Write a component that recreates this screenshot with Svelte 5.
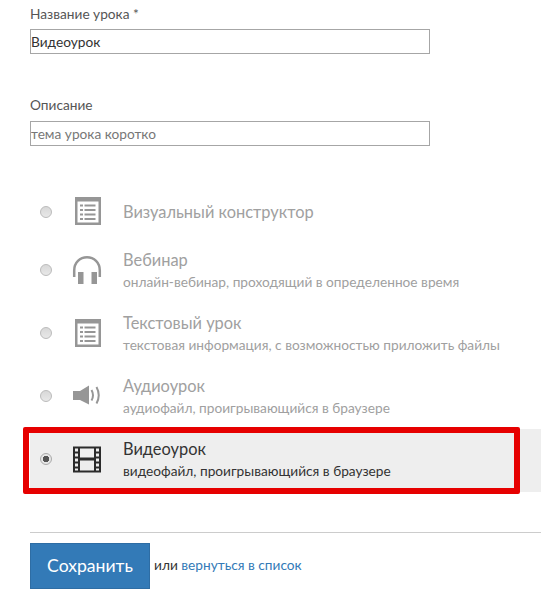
<script>
  const rows = [
    { icon: 'list', title: 'Визуальный конструктор', short: true },
    { icon: 'head', title: 'Вебинар', sub: 'онлайн-вебинар, проходящий в определенное время' },
    { icon: 'list', title: 'Текстовый урок', sub: 'текстовая информация, с возможностью приложить файлы' },
    { icon: 'audio', title: 'Аудиоурок', sub: 'аудиофайл, проигрывающийся в браузере' },
    { icon: 'film', title: 'Видеоурок', sub: 'видеофайл, проигрывающийся в браузере', active: true }
  ];
</script>

{#snippet icon(name)}
  {#if name === 'list'}
    <svg width="30" height="28" viewBox="0 0 30 28">
      <path fill-rule="evenodd" fill="#969696" d="M3 0h26v28H3zM5.500 4.500v21h21v-21z" />
      <path fill="#969696" d="M8 7.500h3v2H8zM12.500 7.500h11v2h-11zM8 12h3v2H8zM12.500 12h11v2h-11zM8 16.500h3v2H8zM12.500 16.500h11v2h-11zM8 21h3v2H8zM12.500 21h11v2h-11z" />
    </svg>
  {:else if name === 'head'}
    <svg width="30" height="28" viewBox="0 0 30 28">
      <path fill="none" stroke="#969696" stroke-width="2.500" d="M2.200 21V14.500C2.200 6.500 8 1.300 15 1.300s12.800 5.200 12.800 13.200V21" />
      <path fill="#969696" d="M6 16h5.500v12H6zM19.500 16H25v12h-5.500z" />
    </svg>
  {:else if name === 'audio'}
    <svg width="30" height="28" viewBox="0 0 30 28">
      <path fill="#969696" d="M1 9h7l9-5.500v19L8 18H1z" />
      <path fill="none" stroke="#969696" stroke-width="2" d="M19.500 8c2 3.500 2 7 0 10.500M24.500 5c3 5.500 3 11 0 16.500" />
    </svg>
  {:else}
    <svg width="30" height="28" viewBox="0 0 30 28">
      <path fill-rule="evenodd" fill="#2b2b2b" d="M1 1.500h28v26H1zM3 3.500v3h3v-3zM3 8.500v3h3v-3zM3 13.500v3h3v-3zM3 18.500v3h3v-3zM3 23.500v2h3v-2zM24 3.500v3h3v-3zM24 8.500v3h3v-3zM24 13.500v3h3v-3zM24 18.500v3h3v-3zM24 23.500v2h3v-2zM8 3.500v9h14v-9zM8 15.500v10h14v-10z" />
    </svg>
  {/if}
{/snippet}

<div class="page">
  <div class="field">
    <label for="n">Название урока *</label>
    <input id="n" value="Видеоурок" />
  </div>
  <div class="field second">
    <label for="d">Описание</label>
    <input id="d" placeholder="тема урока коротко" />
  </div>

  <div class="rows">
    {#each rows as r}
      <div class="row" class:short={r.short} class:active={r.active}>
        <span class="radio"></span>
        <span class="ico">{@render icon(r.icon)}</span>
        <div class="text">
          <div class="title">{r.title}</div>
          {#if r.sub}<div class="sub">{r.sub}</div>{/if}
        </div>
        {#if r.active}<span class="mark"></span>{/if}
      </div>
    {/each}
  </div>

  <div class="actions">
    <button>Сохранить</button>
    <span class="or">или <a href="#list">вернуться в список</a></span>
  </div>
</div>

<style>
  :global(body) {
    margin: 0;
    background: #fff;
  }
  .page {
    width: 541px;
    height: 608px;
    overflow: hidden;
    box-sizing: border-box;
    padding: 5px 0 0 30px;
    font-family: Lato, "Open Sans", sans-serif;
    color: #555;
    font-size: 13.700px;
  }
  .field {
    display: flex;
    flex-direction: column;
    width: 400px;
  }
  .second {
    margin-top: 42px;
  }
  label {
    line-height: 18px;
    margin-bottom: 6px;
  }
  .second label {
    margin-bottom: 7px;
  }
  input {
    box-sizing: border-box;
    height: 25px;
    width: 400px;
    border: 1px solid #a6a6a6;
    padding: 0;
    font: inherit;
    color: #333;
    outline: none;
  }
  input::placeholder {
    color: #777;
    opacity: 1;
  }
  .rows {
    margin-top: 42px;
  }
  .row {
    position: relative;
    box-sizing: border-box;
    height: 63px;
    padding-bottom: 2px;
    display: flex;
    align-items: center;
    color: #a0a0a0;
  }
  .row.short {
    height: 52px;
    padding-bottom: 4px;
  }
  .row.active {
    background: #eee;
    color: #333;
  }
  .radio {
    box-sizing: border-box;
    width: 12px;
    height: 12px;
    margin: -2px 0 0 10px;
    border-radius: 50%;
    border: 1px solid #bbb;
    background: linear-gradient(#d8d8d8, #e8e8e8);
    flex: none;
  }
  .short .radio {
    margin-top: 0;
  }
  .active .radio {
    background: radial-gradient(circle, #555 0 3px, #e6e6e6 3.500px);
    border-color: #aaa;
  }
  .ico {
    width: 30px;
    height: 28px;
    margin: -2px 0 0 20px;
    flex: none;
  }
  .text {
    margin-left: 21px;
  }
  .title {
    font-size: 16.400px;
    line-height: 22px;
  }
  .sub {
    line-height: 22px;
  }
  .mark {
    position: absolute;
    left: -7px;
    top: -2px;
    width: 497px;
    height: 67px;
    box-sizing: border-box;
    border: 6px solid #e60000;
    border-radius: 2px;
  }
  .actions {
    margin-top: 40px;
    padding-top: 10px;
    border-top: 1px solid #ccc;
    display: flex;
    align-items: center;
  }
  button {
    width: 120px;
    height: 46px;
    background: #337ab7;
    border: 1px solid #2e6da4;
    color: #fff;
    font: inherit;
    font-size: 17.600px;
    padding: 0 0 2px;
  }
  .or {
    margin: -4px 0 0 4px;
    color: #333;
  }
  a {
    color: #337ab7;
    text-decoration: none;
  }
</style>
